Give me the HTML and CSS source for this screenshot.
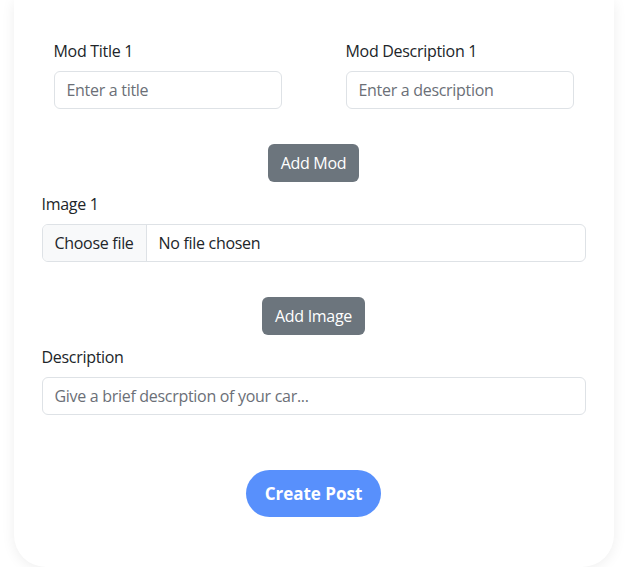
FILE: index.html
```html
<!DOCTYPE html>
<html lang="en">
<head>
<meta charset="utf-8">
<title>Create Post</title>
<link rel="stylesheet" href="styles.css">
</head>
<body>
<main class="card">
  <form class="post-form">
    <div class="mod-row">
      <div class="field">
        <label class="form-label">Mod Title 1</label>
        <input class="form-control" type="text" placeholder="Enter a title">
      </div>
      <div class="field">
        <label class="form-label">Mod Description 1</label>
        <input class="form-control" type="text" placeholder="Enter a description">
      </div>
    </div>
    <div class="btn-row btn-row-mod">
      <button type="button" class="btn-secondary">Add Mod</button>
    </div>
    <div class="field">
      <label class="form-label">Image 1</label>
      <div class="file-control">
        <span class="file-btn">Choose file</span>
        <span class="file-name">No file chosen</span>
      </div>
    </div>
    <div class="btn-row btn-row-image">
      <button type="button" class="btn-secondary">Add Image</button>
    </div>
    <div class="field">
      <label class="form-label">Description</label>
      <input class="form-control" type="text" placeholder="Give a brief descrption of your car...">
    </div>
    <div class="submit-row">
      <button type="submit" class="btn-primary">Create Post</button>
    </div>
  </form>
</main>
</body>
</html>
```
FILE: styles.css
```css
* { box-sizing: border-box; }

html, body {
  margin: 0;
  background: #ffffff;
}

body {
  font-family: "Open Sans", "Noto Sans", sans-serif;
  font-size: 16px;
  letter-spacing: -0.3px;
  color: #212529;
}

.card {
  width: 600px;
  margin: 0 auto;
  background: #ffffff;
  border-radius: 0 0 32px 32px;
  box-shadow: 0 2px 14px rgba(0, 0, 0, 0.07);
  padding: 39px 28px 50px;
}

.post-form {
  display: flex;
  flex-direction: column;
}

.mod-row {
  display: grid;
  grid-template-columns: 228px 228px;
  column-gap: 64px;
  padding: 0 12px;
}

.field {
  display: flex;
  flex-direction: column;
}

.form-label {
  display: block;
  line-height: 24px;
  margin-bottom: 8px;
  color: #212529;
}

.form-control {
  height: 38px;
  width: 100%;
  border: 1px solid #dee2e6;
  border-radius: 6px;
  padding: 0 12px;
  font-family: inherit;
  font-size: 16px;
  letter-spacing: -0.3px;
  color: #212529;
  background: #fff;
  outline: none;
}

.form-control::placeholder {
  color: #6b6f77;
}

.btn-row {
  display: flex;
  justify-content: center;
}

.btn-row-mod {
  margin-top: 35px;
  margin-bottom: 10px;
}

.btn-row-image {
  margin-top: 35px;
  margin-bottom: 10px;
}

.btn-secondary {
  height: 38px;
  padding: 0 13px;
  border: none;
  border-radius: 6px;
  background: #6c757d;
  color: #ffffff;
  font-family: inherit;
  font-size: 16px;
  letter-spacing: -0.3px;
}

.file-control {
  display: flex;
  height: 38px;
  border: 1px solid #dee2e6;
  border-radius: 6px;
  overflow: hidden;
  align-items: stretch;
}

.file-btn {
  display: flex;
  align-items: center;
  padding: 0 12px;
  background: #f8f9fa;
  border-right: 1px solid #dee2e6;
  width: 104px;
  white-space: nowrap;
}

.file-name {
  display: flex;
  align-items: center;
  padding: 0 12px;
}

.submit-row {
  display: flex;
  justify-content: center;
  margin-top: 55px;
}

.btn-primary {
  height: 47px;
  width: 135px;
  border: none;
  border-radius: 24px;
  background: #5890fc;
  color: #ffffff;
  font-family: inherit;
  font-size: 17px;
  font-weight: 700;
  letter-spacing: 0;
}
```
